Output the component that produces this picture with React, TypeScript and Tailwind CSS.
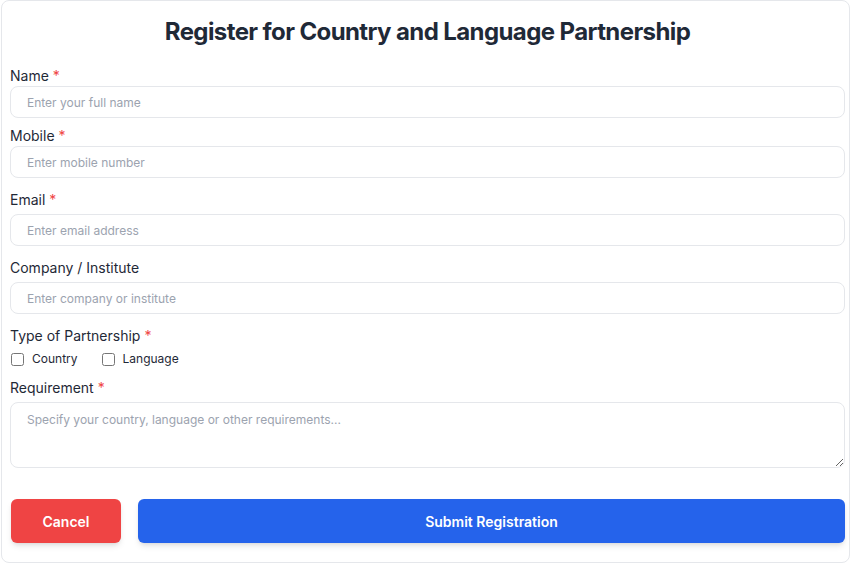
import { useState } from "react";

function Label({ text, required, className = "" }: { text: string; required?: boolean; className?: string }) {
  return (
    <label className={`block text-[14px] leading-5 text-[#1f2937] ${className}`}>
      {text}
      {required ? <span className="ml-1 text-[#ef4444]">*</span> : null}
    </label>
  );
}

const inputCls =
  "block h-8 w-full rounded-lg border border-[#e5e7eb] bg-white px-4 text-[12px] text-[#111827] outline-none placeholder:text-[#9ca3af]";

export default function App() {
  const [types, setTypes] = useState<{ country: boolean; language: boolean }>({
    country: false,
    language: false,
  });

  return (
    <div className="min-h-screen bg-white font-['Inter',sans-serif]">
      <form
        className="ml-px h-[563px] w-[849px] rounded-lg border border-[#e5e7eb] bg-white pl-2 pr-1 pt-[15px]"
        onSubmit={(e) => e.preventDefault()}
      >
        <h1 className="text-center text-[24px] font-bold leading-8 tracking-[-0.025em] text-[#1f2937]">
          Register for Country and Language Partnership
        </h1>

        <Label text="Name" required className="mt-[18px]" />
        <input className={inputCls} placeholder="Enter your full name" />

        <Label text="Mobile" required className="mt-2" />
        <input className={inputCls} placeholder="Enter mobile number" />

        <Label text="Email" required className="mt-3" />
        <input className={`${inputCls} mt-1`} placeholder="Enter email address" />

        <Label text="Company / Institute" className="mt-3" />
        <input className={`${inputCls} mt-1`} placeholder="Enter company or institute" />

        <Label text="Type of Partnership" required className="mt-3" />
        <div className="mt-1 flex items-center gap-6">
          <label className="flex items-center gap-2 text-[12px] text-[#1f2937]">
            <input
              type="checkbox"
              className="ml-px size-[13px] rounded-sm"
              checked={types.country}
              onChange={(e) => setTypes((t) => ({ ...t, country: e.target.checked }))}
            />
            Country
          </label>
          <label className="flex items-center gap-2 text-[12px] text-[#1f2937]">
            <input
              type="checkbox"
              className="size-[13px] rounded-sm"
              checked={types.language}
              onChange={(e) => setTypes((t) => ({ ...t, language: e.target.checked }))}
            />
            Language
          </label>
        </div>

        <Label text="Requirement" required className="mt-[10px]" />
        <textarea
          className="mt-1 block h-[66px] w-full rounded-lg border border-[#e5e7eb] bg-white px-4 py-2 text-[12px] outline-none placeholder:text-[#9ca3af]"
          placeholder="Specify your country, language or other requirements..."
        />

        <div className="mt-[31px] flex gap-[17px] pl-px">
          <button
            type="button"
            className="h-11 w-[110px] rounded-md bg-[#ef4444] text-[14px] font-semibold text-white shadow-md"
          >
            Cancel
          </button>
          <button
            type="submit"
            className="h-11 flex-1 rounded-md bg-[#2563eb] text-[14px] font-semibold text-white shadow-md"
          >
            Submit Registration
          </button>
        </div>
      </form>
    </div>
  );
}
